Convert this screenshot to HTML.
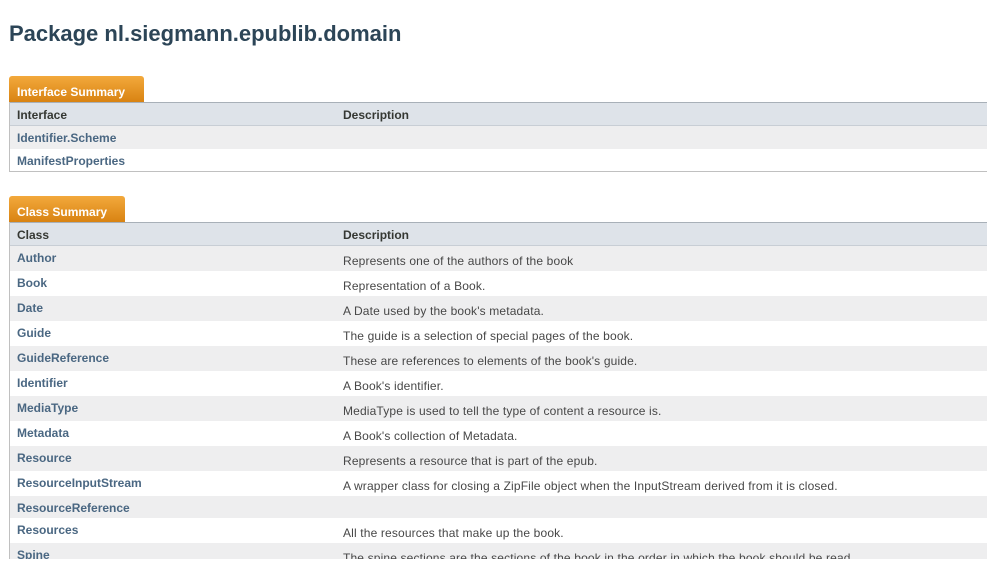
<!DOCTYPE html>
<html><head><style>
body{margin:0;background:#fff;font-family:"Liberation Sans",Arial,sans-serif;width:987px;height:578px;overflow:hidden;position:relative}
h1{position:absolute;left:9px;top:21px;margin:0;font-size:22px;font-weight:bold;color:#2c4557}
.tab{position:absolute;left:9px;height:26px;background:linear-gradient(#f3a93c,#d98312);border-radius:3px 3px 0 0;color:#fff;font-weight:bold;font-size:12px;line-height:32px;padding-left:8px;box-sizing:border-box}
.tbl{position:absolute;left:9px;width:990px;border-left:1px solid #c0c0c0;border-bottom:1px solid #c0c0c0}
.hd{height:22px;background:#dee3e9;border-top:1px solid #a8b0b8;border-bottom:1px solid #c8ced5;font-size:12px;font-weight:bold;color:#353833;position:relative}
.r{position:relative;font-size:12px}
.g{background:#eeeeef}
.n{position:absolute;left:7px;font-weight:bold;color:#4a6782}
.d{position:absolute;left:333px;color:#474747;letter-spacing:0.15px}
.hd span{position:absolute;top:5px}
</style></head><body>
<h1>Package nl.siegmann.epublib.domain</h1>
<div class="tab" style="top:76px;width:135px">Interface Summary</div>
<div class="tbl" style="top:102px">
<div class="hd"><span style="left:7px">Interface</span><span style="left:333px">Description</span></div>
<div class="r g" style="height:23px"><span class="n" style="top:5px">Identifier.Scheme</span></div>
<div class="r" style="height:22px"><span class="n" style="top:5px">ManifestProperties</span></div>
</div>
<div class="tab" style="top:196px;width:116px">Class Summary</div>
<div class="tbl" style="top:222px;border-bottom:none;height:337px;overflow:hidden">
<div class="hd"><span style="left:7px">Class</span><span style="left:333px">Description</span></div>
<div class="r g" style="height:25px"><span class="n" style="top:5px">Author</span><span class="d" style="top:8px">Represents one of the authors of the book</span></div>
<div class="r" style="height:25px"><span class="n" style="top:5px">Book</span><span class="d" style="top:8px">Representation of a Book.</span></div>
<div class="r g" style="height:25px"><span class="n" style="top:5px">Date</span><span class="d" style="top:8px">A Date used by the book's metadata.</span></div>
<div class="r" style="height:25px"><span class="n" style="top:5px">Guide</span><span class="d" style="top:8px">The guide is a selection of special pages of the book.</span></div>
<div class="r g" style="height:25px"><span class="n" style="top:5px">GuideReference</span><span class="d" style="top:8px">These are references to elements of the book's guide.</span></div>
<div class="r" style="height:25px"><span class="n" style="top:5px">Identifier</span><span class="d" style="top:8px">A Book's identifier.</span></div>
<div class="r g" style="height:25px"><span class="n" style="top:5px">MediaType</span><span class="d" style="top:8px">MediaType is used to tell the type of content a resource is.</span></div>
<div class="r" style="height:25px"><span class="n" style="top:5px">Metadata</span><span class="d" style="top:8px">A Book's collection of Metadata.</span></div>
<div class="r g" style="height:25px"><span class="n" style="top:5px">Resource</span><span class="d" style="top:8px">Represents a resource that is part of the epub.</span></div>
<div class="r" style="height:25px"><span class="n" style="top:5px">ResourceInputStream</span><span class="d" style="top:8px">A wrapper class for closing a ZipFile object when the InputStream derived from it is closed.</span></div>
<div class="r g" style="height:22px"><span class="n" style="top:5px">ResourceReference</span></div>
<div class="r" style="height:25px"><span class="n" style="top:5px">Resources</span><span class="d" style="top:8px">All the resources that make up the book.</span></div>
<div class="r g" style="height:25px"><span class="n" style="top:5px">Spine</span><span class="d" style="top:8px">The spine sections are the sections of the book in the order in which the book should be read.</span></div>
</div>
</body></html>
